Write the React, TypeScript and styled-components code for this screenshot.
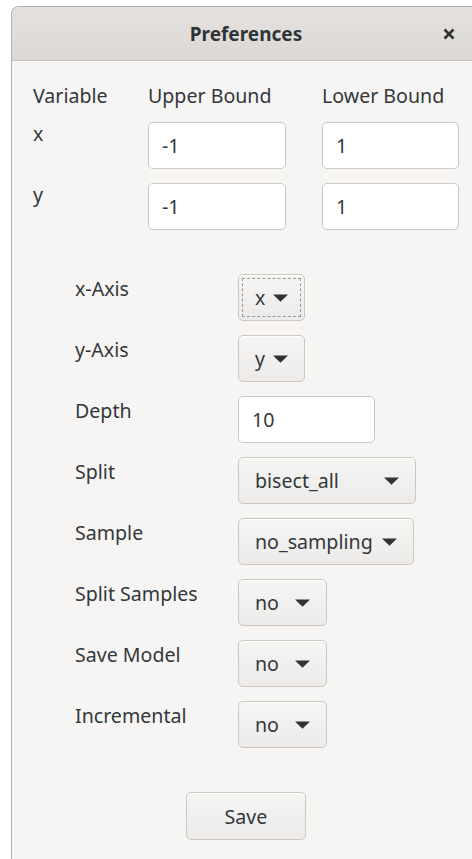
import styled, { createGlobalStyle } from "styled-components";

const GlobalStyle = createGlobalStyle`
  html, body {
    margin: 0;
    padding: 0;
    background: #ffffff;
    overflow: hidden;
  }

  body {
    font-family: "Noto Sans", "Open Sans", sans-serif;
    font-size: 19.6px;
    color: #33383a;
  }
`;

const StyledWindow = styled.div`
  display: flex;
  flex-direction: column;
  width: 468px;
  height: calc(100vh - 6px);
  margin: 6px 0 0 11px;
  border: 1px solid #b3afaa;
  border-bottom: none;
  border-radius: 8px 8px 0 0;
  background: #f6f5f4;
  overflow: hidden;
`;

const StyledTitleBar = styled.div`
  display: grid;
  grid-template-columns: 1fr auto 1fr;
  align-items: center;
  flex: none;
  height: 53px;
  padding: 0 19px;
  background: linear-gradient(#e4e1de, #dcd8d5);
  border-bottom: 1px solid #c4beb8;
`;

const StyledTitle = styled.h1`
  grid-column: 2;
  margin: 0;
  font-size: 19px;
  font-weight: 700;
  color: #2e3436;
`;

const StyledCloseButton = styled.button`
  justify-self: end;
  display: flex;
  align-items: center;
  justify-content: center;
  width: 24px;
  height: 24px;
  padding: 0;
  border: none;
  background: transparent;
`;

const StyledContent = styled.div`
  padding: 23px 21px 0 21px;
`;

const StyledBoundsGrid = styled.div`
  display: grid;
  grid-template-columns: 79px 138px 137px;
  column-gap: 36px;
  row-gap: 14px;
  align-items: start;
`;

const StyledCellText = styled.span`
  line-height: 24px;
  white-space: nowrap;
`;

const StyledEntry = styled.input<{ $width?: number }>`
  box-sizing: border-box;
  width: ${({ $width }) => ($width ? `${$width}px` : "100%")};
  height: 47px;
  padding: 0 13px;
  border: 1px solid #cdc7c2;
  border-radius: 5px;
  background: #ffffff;
  font: inherit;
  color: inherit;
  outline: none;
`;

const StyledOptionsGrid = styled.div`
  display: grid;
  grid-template-columns: 163px auto;
  row-gap: 14px;
  margin: 44px 0 0 42px;
  justify-items: start;
  align-items: start;
`;

const StyledOptionLabel = styled.span`
  padding-top: 3px;
  line-height: 24px;
  white-space: nowrap;
`;

const StyledDropdown = styled.button<{ $width: number; $focused?: boolean }>`
  box-sizing: border-box;
  display: flex;
  align-items: center;
  justify-content: space-between;
  width: ${({ $width }) => $width}px;
  height: 47px;
  padding: 0 16px;
  border: 1px solid #cdc7c2;
  border-radius: 5px;
  background: linear-gradient(#f6f5f4, #edebe9);
  box-shadow: inset 0 1px #ffffff;
  font: inherit;
  color: inherit;
  outline: ${({ $focused }) => ($focused ? "1px dashed #9a9895" : "none")};
  outline-offset: -5px;
`;

const StyledArrow = styled.svg`
  flex: none;
  width: 15px;
  height: 8px;
`;

const StyledSaveRow = styled.div`
  display: flex;
  justify-content: center;
  margin-top: 44px;
`;

const StyledSaveButton = styled.button`
  box-sizing: border-box;
  width: 120px;
  height: 48px;
  border: 1px solid #cdc7c2;
  border-radius: 5px;
  background: linear-gradient(#f6f5f4, #edebe9);
  box-shadow: inset 0 1px #ffffff;
  font: inherit;
  color: inherit;
`;

const Arrow = () => (
  <StyledArrow viewBox="0 0 15 8">
    <path d="M0 0.5 L15 0.5 L7.5 7.8 Z" fill="#2e3436" />
  </StyledArrow>
);

const Dropdown = ({ value, width, focused }: { value: string; width: number; focused?: boolean }) => (
  <StyledDropdown $width={width} $focused={focused}>
    <span>{value}</span>
    <Arrow />
  </StyledDropdown>
);

const bounds = [
  { name: "x", upper: "-1", lower: "1" },
  { name: "y", upper: "-1", lower: "1" },
];

const options = [
  { label: "Split", value: "bisect_all", width: 178 },
  { label: "Sample", value: "no_sampling", width: 176 },
  { label: "Split Samples", value: "no", width: 89 },
  { label: "Save Model", value: "no", width: 89 },
  { label: "Incremental", value: "no", width: 89 },
];

export default function App() {
  return (
    <>
      <GlobalStyle />
      <StyledWindow>
        <StyledTitleBar>
          <StyledTitle>Preferences</StyledTitle>
          <StyledCloseButton aria-label="Close">
            <svg width="12" height="12" viewBox="0 0 12 12">
              <path d="M1.5 1.5 L10.5 10.5 M10.5 1.5 L1.5 10.5" stroke="#2e3436" strokeWidth="2.6" />
            </svg>
          </StyledCloseButton>
        </StyledTitleBar>

        <StyledContent>
          <StyledBoundsGrid>
            <StyledCellText>Variable</StyledCellText>
            <StyledCellText>Upper Bound</StyledCellText>
            <StyledCellText>Lower Bound</StyledCellText>
            {bounds.map((b) => (
              <>
                <StyledCellText key={`${b.name}-label`}>{b.name}</StyledCellText>
                <StyledEntry key={`${b.name}-upper`} defaultValue={b.upper} />
                <StyledEntry key={`${b.name}-lower`} defaultValue={b.lower} />
              </>
            ))}
          </StyledBoundsGrid>

          <StyledOptionsGrid>
            <StyledOptionLabel>x-Axis</StyledOptionLabel>
            <Dropdown value="x" width={67} focused />
            <StyledOptionLabel>y-Axis</StyledOptionLabel>
            <Dropdown value="y" width={67} />
            <StyledOptionLabel>Depth</StyledOptionLabel>
            <StyledEntry $width={137} defaultValue="10" />
            {options.map((o) => (
              <>
                <StyledOptionLabel>{o.label}</StyledOptionLabel>
                <Dropdown value={o.value} width={o.width} />
              </>
            ))}
          </StyledOptionsGrid>

          <StyledSaveRow>
            <StyledSaveButton>Save</StyledSaveButton>
          </StyledSaveRow>
        </StyledContent>
      </StyledWindow>
    </>
  );
}
